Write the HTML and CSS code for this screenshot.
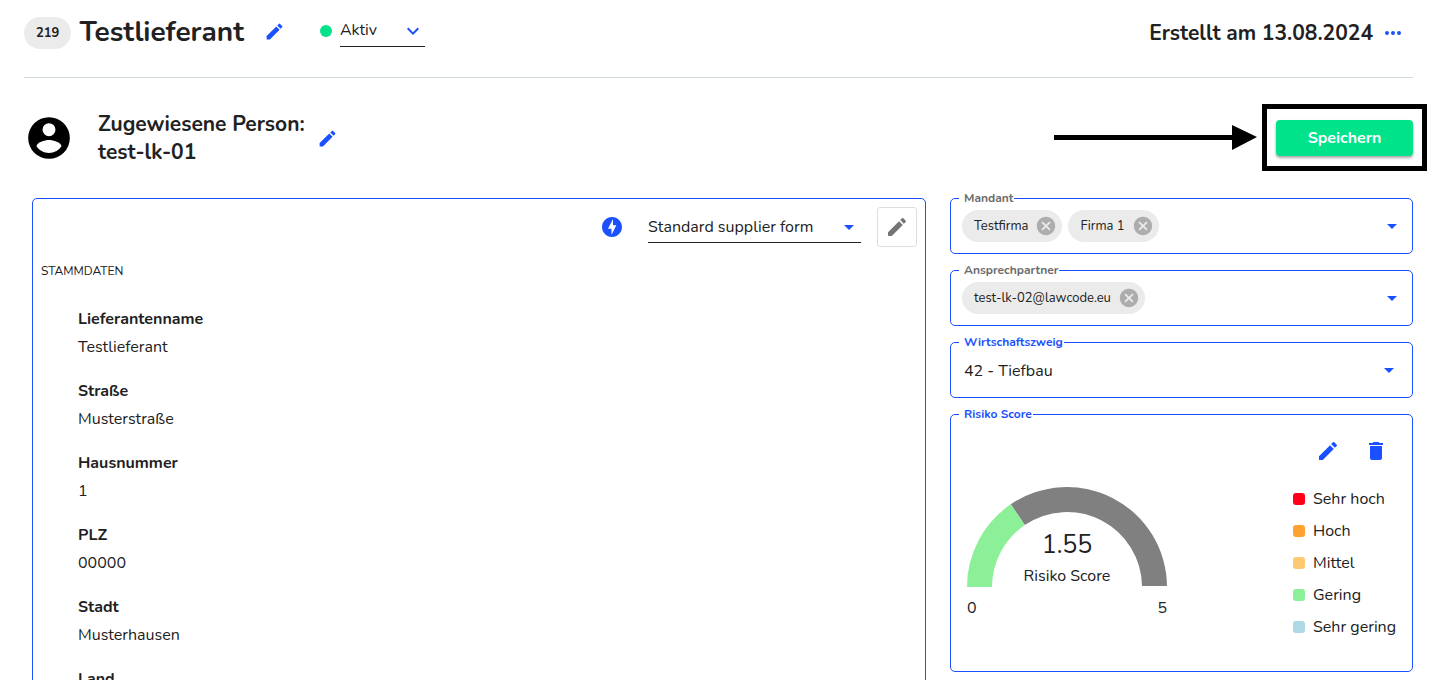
FILE: index.html
```html
<!DOCTYPE html>
<html lang="de">
<head>
<meta charset="utf-8">
<title>Testlieferant</title>
<link rel="stylesheet" href="styles.css">
</head>
<body>
<svg class="sprite" aria-hidden="true">
  <symbol id="pencil" viewBox="0 0 24 24"><path d="M3 17.25V21h3.75L17.81 9.94l-3.75-3.75L3 17.25zM20.71 7.04a1 1 0 0 0 0-1.41l-2.34-2.34a1 1 0 0 0-1.41 0l-1.83 1.83 3.75 3.75 1.83-1.83z"/></symbol>
  <symbol id="chevron" viewBox="0 0 24 24"><path d="M16.59 8.59 12 13.17 7.41 8.59 6 10l6 6 6-6z"/></symbol>
  <symbol id="triangle" viewBox="0 0 24 24"><path d="m7 10 5 5 5-5z"/></symbol>
  <symbol id="cancel" viewBox="0 0 24 24"><path d="M12 2C6.47 2 2 6.47 2 12s4.47 10 10 10 10-4.47 10-10S17.53 2 12 2zm5 13.59L15.59 17 12 13.41 8.41 17 7 15.59 10.59 12 7 8.41 8.41 7 12 10.59 15.59 7 17 8.41 13.41 12 17 15.59z"/></symbol>
</svg>
<div class="page">
  <header class="header">
    <span class="badge">219</span>
    <h1 class="title">Testlieferant</h1>
    <button class="icon-button header-edit" aria-label="Name bearbeiten"><svg class="icon-small"><use href="#pencil"/></svg></button>
    <span class="status-dot"></span>
    <div class="select-line select-status">
      <select aria-label="Status"><option>Aktiv</option></select>
      <svg class="icon select-arrow"><use href="#chevron"/></svg>
    </div>
    <span class="created">Erstellt am 13.08.2024</span>
    <button class="icon-button" aria-label="Mehr"><svg class="icon" viewBox="0 0 24 24"><path d="M6 10a2 2 0 1 0 0 4 2 2 0 0 0 0-4zm12 0a2 2 0 1 0 0 4 2 2 0 0 0 0-4zm-6 0a2 2 0 1 0 0 4 2 2 0 0 0 0-4z"/></svg></button>
  </header>

  <section class="person">
    <svg class="avatar" viewBox="0 0 24 24"><path fill-rule="evenodd" d="M12 2a10 10 0 1 0 0 20 10 10 0 0 0 0-20zM12 4.900a3.100 3.100 0 1 1 0 6.200 3.100 3.100 0 0 1 0-6.200zM12 19.200c-2.500 0-4.710-1.280-6-3.220.03-1.990 4-3.080 6-3.080s5.970 1.090 6 3.080a7.200 7.200 0 0 1-6 3.220z"/></svg>
    <h2 class="person-name">Zugewiesene Person:<br>test-lk-01</h2>
    <button class="icon-button" aria-label="Person bearbeiten"><svg class="icon-small"><use href="#pencil"/></svg></button>
    <svg class="pointer" viewBox="0 0 203 26"><path d="M0 10h178V0l25 12-25 13V15H0z"/></svg>
    <div class="save">
      <button class="save-button">Speichern</button>
      <span class="save-frame"></span>
    </div>
  </section>

  <main class="columns">
    <section class="card">
      <div class="toolbar">
        <svg class="icon bolt" viewBox="0 0 24 24"><path d="M12 2.02c-5.51 0-9.98 4.47-9.98 9.98s4.47 9.98 9.98 9.98 9.98-4.47 9.98-9.98S17.51 2.02 12 2.02zM11.48 20v-6.26H8L13 4v6.26h3.35L11.48 20z"/></svg>
        <div class="select-line select-form">
          <select aria-label="Formular"><option>Standard supplier form</option></select>
          <svg class="icon select-arrow"><use href="#triangle"/></svg>
        </div>
        <button class="edit-form" aria-label="Formular bearbeiten"><svg class="icon"><use href="#pencil"/></svg></button>
      </div>
      <h3 class="section-title">STAMMDATEN</h3>
      <dl class="details">
        <div><dt>Lieferantenname</dt><dd>Testlieferant</dd></div>
        <div><dt>Straße</dt><dd>Musterstraße</dd></div>
        <div><dt>Hausnummer</dt><dd>1</dd></div>
        <div><dt>PLZ</dt><dd>00000</dd></div>
        <div><dt>Stadt</dt><dd>Musterhausen</dd></div>
        <div><dt>Land</dt><dd></dd></div>
      </dl>
    </section>

    <aside class="side">
      <fieldset class="field">
        <legend class="muted">Mandant</legend>
        <div class="field-row">
          <span class="chip">Testfirma<button aria-label="Testfirma entfernen"><svg class="icon-chip"><use href="#cancel"/></svg></button></span>
          <span class="chip">Firma 1<button aria-label="Firma 1 entfernen"><svg class="icon-chip"><use href="#cancel"/></svg></button></span>
          <button class="icon-button open" aria-label="Mandant öffnen"><svg class="icon"><use href="#triangle"/></svg></button>
        </div>
      </fieldset>
      <fieldset class="field">
        <legend class="muted">Ansprechpartner</legend>
        <div class="field-row">
          <span class="chip">test-lk-02@lawcode.eu<button aria-label="test-lk-02@lawcode.eu entfernen"><svg class="icon-chip"><use href="#cancel"/></svg></button></span>
          <button class="icon-button open" aria-label="Ansprechpartner öffnen"><svg class="icon"><use href="#triangle"/></svg></button>
        </div>
      </fieldset>
      <fieldset class="field">
        <legend><label for="branch">Wirtschaftszweig</label></legend>
        <div class="field-row field-select">
          <select id="branch"><option>42 - Tiefbau</option></select>
          <svg class="icon select-arrow"><use href="#triangle"/></svg>
        </div>
      </fieldset>
      <fieldset class="field risk">
        <legend>Risiko Score</legend>
        <div class="risk-actions">
          <button class="icon-button" aria-label="Bearbeiten"><svg class="icon"><use href="#pencil"/></svg></button>
          <button class="icon-button" aria-label="Löschen"><svg class="icon" viewBox="0 0 24 24"><path d="M6 19c0 1.100.9 2 2 2h8c1.100 0 2-.9 2-2V7H6v12zM19 4h-3.500l-1-1h-5l-1 1H5v2h14V4z"/></svg></button>
        </div>
        <div class="risk-body">
          <svg class="gauge" viewBox="0 0 200 132">
            <path class="gauge-rest" d="M43.800 17.300A100 100 0 0 1 200 99h-25A75 75 0 0 0 57.800 38z"/>
            <path class="gauge-value" d="M0 100A100 100 0 0 1 43.800 17.300L57.800 38A75 75 0 0 0 25 100z"/>
            <text class="gauge-number" x="100" y="66" text-anchor="middle">1.55</text>
            <text x="100" y="94" text-anchor="middle">Risiko Score</text>
            <text x="0" y="126">0</text>
            <text x="200" y="126" text-anchor="end">5</text>
          </svg>
          <ul class="levels">
            <li><span class="swatch very-high"></span>Sehr hoch</li>
            <li><span class="swatch high"></span>Hoch</li>
            <li><span class="swatch medium"></span>Mittel</li>
            <li><span class="swatch low"></span>Gering</li>
            <li><span class="swatch very-low"></span>Sehr gering</li>
          </ul>
        </div>
      </fieldset>
    </aside>
  </main>
</div>
</body>
</html>
```
FILE: styles.css
```css
:root {
  --blue: #1a50ff;
  --green: #00e38a;
  --text: #212121;
}

* { box-sizing: border-box; }

body {
  margin: 0;
  background: #fff;
  color: var(--text);
  font: 16px/24px Nunito, Lato, sans-serif;
}

button, select {
  margin: 0;
  padding: 0;
  border: 0;
  background: none;
  color: inherit;
  font: inherit;
}

select {
  appearance: none;
  width: 100%;
  outline: 0;
}

h1, h2, h3, dl, dd, ul { margin: 0; padding: 0; }

svg { display: block; flex: none; fill: currentColor; }

.sprite { position: absolute; width: 0; height: 0; }
.icon { width: 24px; height: 24px; }
.icon-small { width: 21px; height: 21px; }
.icon-chip { width: 22px; height: 22px; }
.icon-button { flex: none; color: var(--blue); }

.page {
  height: 100vh;
  overflow: hidden;
  padding: 0 21px 0 24px;
}

.header {
  display: flex;
  align-items: center;
  height: 78px;
  padding-bottom: 12px;
  border-bottom: 1px solid #cfd8dc;
}

.badge {
  padding: 0 12px;
  border-radius: 16px;
  background: #ebebeb;
  font-size: 13px;
  font-weight: 700;
  line-height: 32px;
}

.title {
  margin: 0 0 2px 8px;
  font-size: 28px;
  line-height: 36px;
}

.header-edit { margin: 0 0 2px 20px; }

.status-dot {
  width: 12px;
  height: 12px;
  margin: 0 8px 4px 35px;
  border-radius: 50%;
  background: var(--green);
}

.select-line {
  position: relative;
  border-bottom: 1px solid var(--text);
}

.select-line select { display: block; height: 31px; }
.select-status { width: 85px; margin-bottom: 4px; }
.select-form { width: 213px; }

.select-arrow {
  position: absolute;
  top: 4px;
  right: 0;
  color: var(--blue);
  pointer-events: none;
}

.created {
  margin: 0 8px 0 auto;
  font-size: 21px;
  font-weight: 700;
}

.header .icon-button:last-child { margin-right: 8px; }

.person {
  display: flex;
  align-items: center;
  height: 120px;
}

.avatar { width: 50px; height: 50px; color: #000; }

.person-name {
  margin: 0 12px 0 24px;
  font-size: 21px;
  line-height: 28px;
}

.pointer {
  width: 203px;
  height: 26px;
  margin: 0 19px 0 auto;
  color: #000;
}

.save { position: relative; }

.save-button {
  display: block;
  width: 137px;
  height: 36px;
  border-radius: 4px;
  background: var(--green);
  box-shadow: 0 2px 3px rgba(0, 0, 0, .35);
  color: #fff;
  font-weight: 700;
}

.save-frame {
  position: absolute;
  inset: -16px -14px -15px;
  border: 5px solid #000;
  pointer-events: none;
}

.columns {
  display: grid;
  grid-template-columns: 2fr 1fr;
}

.card {
  margin: 0 24px 0 8px;
  padding: 8px;
  border: 1px solid var(--blue);
  border-radius: 5px;
}

.toolbar {
  display: flex;
  align-items: center;
  justify-content: flex-end;
}

.bolt { margin-right: 24px; color: var(--blue); }

.edit-form {
  display: grid;
  place-items: center;
  width: 40px;
  height: 40px;
  margin-left: 16px;
  border: 1px solid #dedede;
  border-radius: 3px;
  color: #757575;
}

.section-title {
  margin-top: 12px;
  font-size: 12px;
  font-weight: 400;
}

.details {
  display: grid;
  gap: 16px;
  margin: 22px 0 0 37px;
  line-height: 28px;
}

.details dt { font-weight: 700; }
.details dd { min-height: 28px; }

.side {
  display: flex;
  flex-direction: column;
  gap: 10px;
  margin-top: -6px;
}

.field {
  min-width: 0;
  margin: 0;
  padding: 5px 8px 11px 11px;
  border: 1px solid var(--blue);
  border-radius: 5px;
}

.field legend {
  margin-left: -3px;
  padding: 0 1px 0 5px;
  color: var(--blue);
  font-size: 12px;
  font-weight: 700;
  line-height: 13px;
}

.field legend.muted { color: #6b6b6b; }

.field-row {
  position: relative;
  display: flex;
  align-items: center;
  gap: 6px;
  height: 32px;
}

.open { margin-left: auto; }

.field-select select { height: 32px; padding: 2px 0 0 2px; }
.field-select .select-arrow { right: 3px; }

.chip {
  display: flex;
  align-items: center;
  gap: 7px;
  height: 32px;
  padding: 0 5px 0 12px;
  border-radius: 16px;
  background: #ebebeb;
  font-size: 13px;
}

.chip button { color: #adadad; }

.risk { padding: 6px 12px 28px 16px; }
.risk legend { margin-left: -8px; }

.risk-actions {
  display: flex;
  justify-content: flex-end;
}

.risk-actions .icon-button { padding: 12px; }

.risk-body {
  display: flex;
  justify-content: space-between;
  align-items: flex-start;
  margin-top: 8px;
}

.gauge {
  width: 200px;
  height: 132px;
  margin-top: 4px;
}

.gauge-rest { fill: #808080; }
.gauge-value { fill: #8cf098; }
.gauge-number { font-size: 25px; }

.levels {
  width: 107px;
  list-style: none;
  line-height: 32px;
}

.levels li {
  display: flex;
  align-items: center;
  gap: 8px;
  white-space: nowrap;
}

.swatch {
  width: 12px;
  height: 12px;
  border-radius: 3px;
}

.very-high { background: #ff0019; }
.high { background: #ffa230; }
.medium { background: #ffc973; }
.low { background: #8cf098; }
.very-low { background: #add8e6; }
```
